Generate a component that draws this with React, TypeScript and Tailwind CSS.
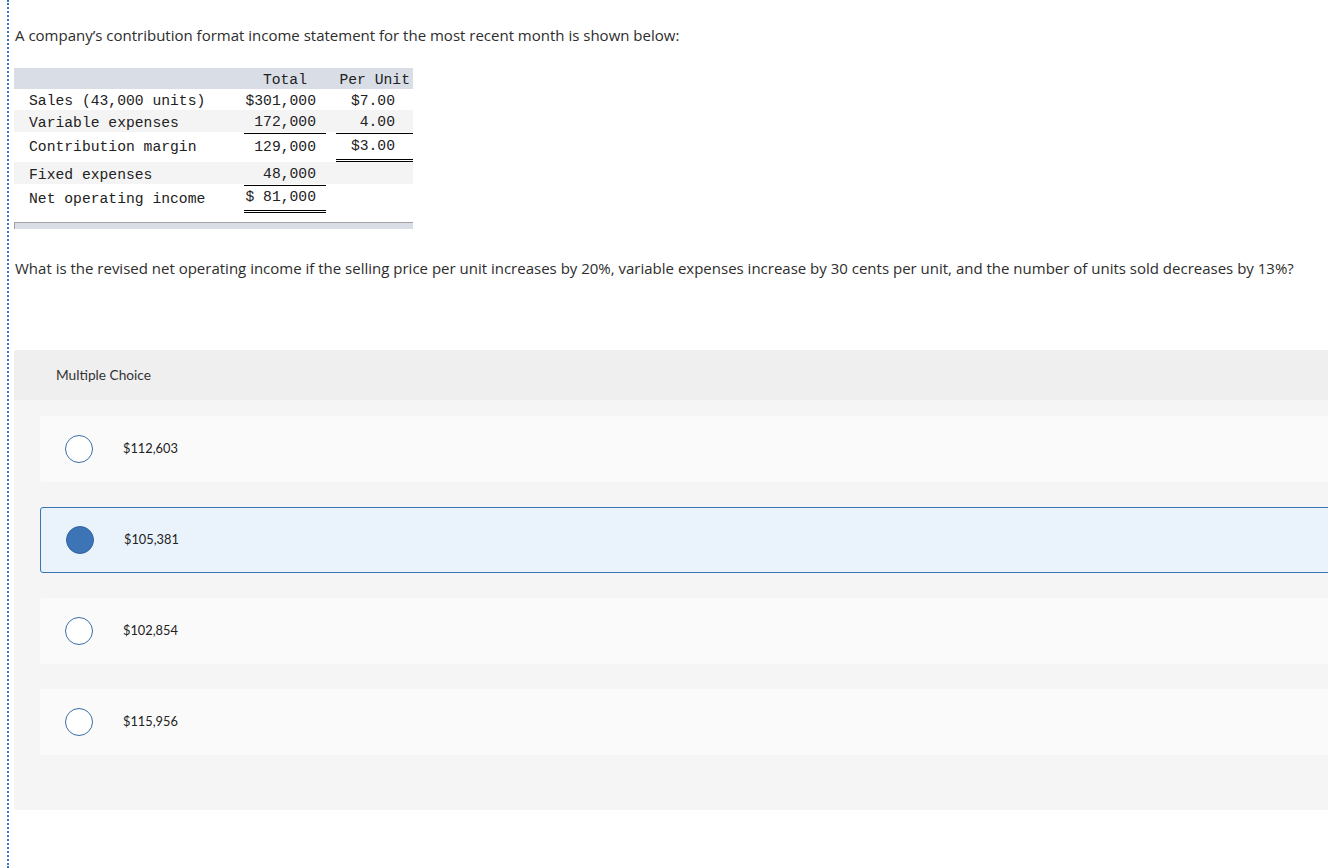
import React from 'react'

const MONO = { fontFamily: '"Liberation Mono", "DejaVu Sans Mono", monospace' }

const CHOICES = [
  { label: '$112,603', selected: false },
  { label: '$105,381', selected: true },
  { label: '$102,854', selected: false },
  { label: '$115,956', selected: false },
]

function Row({ label, total, unit, bg, h, totalLine, unitLine }: {
  label: string; total: string; unit: string; bg: string; h: string; totalLine?: string; unitLine?: string
}) {
  return (
    <div className={`grid grid-cols-[230px_82px_10px_77px] ${bg} ${h}`}>
      <div className="flex items-center pl-[15px] pt-[1px]">{label}</div>
      <div className={`flex items-center justify-end pr-[10px] pt-[1px] ${totalLine ?? ''}`}>{total}</div>
      <div />
      <div className={`flex items-center justify-end pr-[18px] pt-[1px] ${unitLine ?? ''}`}>{unit}</div>
    </div>
  )
}

export default function App() {
  return (
    <div className="w-[1328px] h-[868px] overflow-hidden bg-white">
      <div className="ml-[7px] h-full border-l-2 border-dotted border-[#3b73b9] pl-[5px] text-[#2d2d2d]"
        style={{ fontFamily: '"Open Sans", Lato, sans-serif' }}>
        <p className="pt-[25px] pl-[1px] text-[15px] leading-[20px]">
          A company’s contribution format income statement for the most recent month is shown below:
        </p>

        {/* income statement */}
        <div className="mt-[23px] w-[399px] text-[14.7px] text-[#222]" style={MONO}>
          <div className="grid grid-cols-[230px_82px_10px_77px] h-[21px] bg-[#d9dde6]">
            <div />
            <div className="flex items-center justify-end pr-[19px] pt-[1px]">Total</div>
            <div />
            <div className="flex items-center justify-end pr-[3px] pt-[1px]">Per Unit</div>
          </div>
          <Row label="Sales (43,000 units)" total="$301,000" unit="$7.00" bg="bg-white" h="h-[21px]" />
          <Row label="Variable expenses" total="172,000" unit="4.00" bg="bg-[#f4f4f4]" h="h-[22px]"
            totalLine="border-b border-black" unitLine="border-b border-black" />
          <Row label="Contribution margin" total="129,000" unit="$3.00" bg="bg-white" h="h-[30px]"
            unitLine="border-b-[3px] border-double border-black" />
          <Row label="Fixed expenses" total="48,000" unit="" bg="bg-[#f4f4f4]" h="h-[22px]"
            totalLine="border-b border-black" />
          <Row label="Net operating income" total="$ 81,000" unit="" bg="bg-white" h="h-[29px]"
            totalLine="border-b-[3px] border-double border-black" />
          <div className="mt-[9px] h-[7px] border-t border-l border-[#a3a3a3] bg-[#d9dde6]" />
        </div>

        <p className="mt-[29px] pl-[1px] text-[15px] leading-[20px]">
          What is the revised net operating income if the selling price per unit increases by 20%, variable expenses increase by 30 cents per unit, and the number of units sold decreases by 13%?
        </p>

        {/* multiple choice */}
        <div className="mt-[72px] w-[1340px] rounded-[3px] bg-[#f5f5f5] pb-[55px]" style={{ fontFamily: 'Lato, sans-serif' }}>
          <div className="flex h-[50px] items-center rounded-t-[3px] bg-[#efefef] pl-[42px] text-[13.7px] text-[#333]">
            Multiple Choice
          </div>
          <div className="mt-[16px] flex flex-col gap-[25px] pl-[26px]">
            {CHOICES.map(c => (
              <div key={c.label}
                className={`flex h-[66px] items-center rounded-[3px] pl-[25px] ${c.selected ? 'border border-[#3b73b9] bg-[#eaf2fb] pl-[24px]' : 'bg-[#fafafa]'}`}>
                <span className={`h-[28px] w-[28px] shrink-0 rounded-full border ${c.selected ? 'border-[#2f649f] bg-[#3d74b5]' : 'border-[#3a6ea5] bg-white'}`} />
                <span className="ml-[30px] text-[12.8px] text-[#222]">{c.label}</span>
              </div>
            ))}
          </div>
        </div>
      </div>
    </div>
  )
}
